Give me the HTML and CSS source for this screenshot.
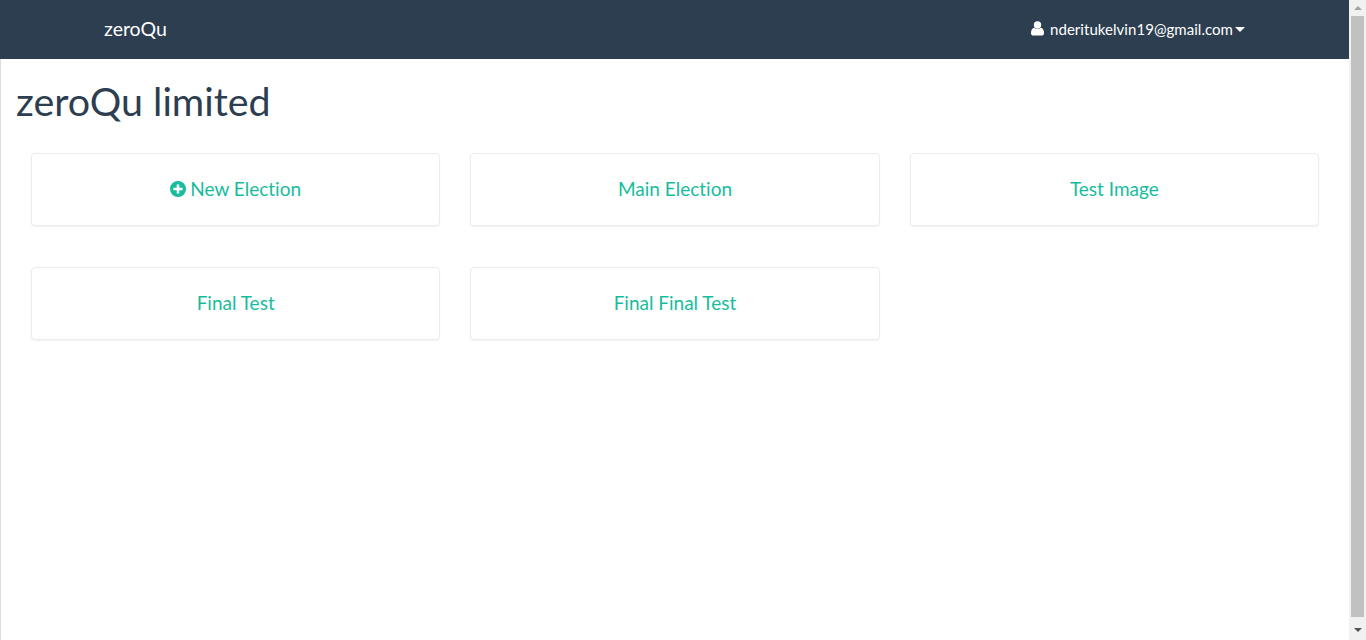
FILE: index.html
```html
<!DOCTYPE html>
<html lang="en">
<head>
<meta charset="utf-8">
<title>zeroQu limited</title>
<link rel="stylesheet" href="styles.css">
</head>
<body>
<div class="page">
  <header class="navbar">
    <a class="brand" href="#">zeroQu</a>
    <a class="user" href="#">
      <svg class="user-icon" viewBox="0 0 13 15" aria-hidden="true"><circle cx="6.5" cy="4" r="3.7" fill="#fff"/><path d="M0 12.2C0 9.2 1.2 7 3.2 6.8 4 7.6 5.1 8.1 6.5 8.1s2.5-.5 3.3-1.3c2 .2 3.2 2.4 3.2 5.4 0 1.5-1 2.4-2.4 2.4H2.4C1 14.6 0 13.7 0 12.2z" fill="#fff"/></svg>
      <span class="email">nderitukelvin19@gmail.com</span>
      <span class="caret"></span>
    </a>
  </header>
  <main class="content">
    <h1 class="title">zeroQu limited</h1>
    <div class="grid">
      <a class="card" href="#">
        <svg class="plus-icon" viewBox="0 0 16 16" aria-hidden="true"><path fill-rule="evenodd" d="M8 0a8 8 0 1 1 0 16A8 8 0 0 1 8 0zM6.7 3.4v3.3H3.4v2.6h3.3v3.3h2.6V9.3h3.3V6.7H9.3V3.4z" fill="#18bc9c"/></svg>
        <span>New Election</span>
      </a>
      <a class="card" href="#"><span>Main Election</span></a>
      <a class="card" href="#"><span>Test Image</span></a>
      <a class="card" href="#"><span>Final Test</span></a>
      <a class="card" href="#"><span>Final Final Test</span></a>
    </div>
  </main>
</div>
<div class="scrollbar" aria-hidden="true">
  <div class="arrow-up"></div>
  <div class="thumb"></div>
  <div class="arrow-down"></div>
</div>
</body>
</html>
```
FILE: styles.css
```css
* { box-sizing: border-box; }
html, body { margin: 0; height: 640px; overflow: hidden; }
body {
  display: flex;
  font-family: Lato, "Liberation Sans", sans-serif;
  font-variant-ligatures: none;
  background: #fff;
  color: #2c3e50;
}
a { text-decoration: none; }
.page { flex: 1; min-width: 0; display: flex; flex-direction: column; }
.navbar {
  height: 59px;
  flex: none;
  background: #2c3e50;
  display: flex;
  align-items: center;
  justify-content: space-between;
  padding: 0 104px 2px;
}
.brand { color: #fff; font-size: 19.5px; line-height: 57px; }
.user { color: #fff; font-size: 15px; display: flex; align-items: center; }
.user-icon { width: 13px; height: 15px; margin-right: 6px; }
.email { letter-spacing: 0.04px; }
.caret {
  width: 0; height: 0;
  margin-left: 2px;
  margin-top: 1px;
  border-left: 5px solid transparent;
  border-right: 5px solid transparent;
  border-top: 5px solid #fff;
}
.content {
  flex: 1;
  border-left: 1px solid #ddd;
  padding: 0 30px 0 30px;
}
.title {
  margin: 18px 0 0 -15px;
  font-size: 39.4px;
  font-weight: 400;
  line-height: 47px;
}
.grid {
  display: grid;
  grid-template-columns: repeat(3, 1fr);
  column-gap: 30px;
  row-gap: 41px;
  margin-top: 29px;
}
.card {
  height: 73px;
  display: flex;
  align-items: center;
  justify-content: center;
  gap: 4px;
  padding-bottom: 2px;
  border: 1px solid #ececec;
  border-radius: 4px;
  box-shadow: 0 1px 2px rgba(0,0,0,.06);
  color: #18bc9c;
  font-size: 19px;
  background: #fff;
}
.plus-icon { width: 16px; height: 16px; }
.scrollbar {
  width: 17px;
  flex: none;
  height: 640px;
  background: #f1f1f1;
  display: flex;
  flex-direction: column;
  align-items: center;
}
.arrow-up {
  margin-top: 6px;
  height: 0; width: 0;
  border-left: 4px solid transparent;
  border-right: 4px solid transparent;
  border-bottom: 4px solid #a3a3a3;
}
.thumb { width: 13px; margin-top: 6px; height: 601px; background: #c1c1c1; }
.arrow-down {
  margin-top: 11px;
  height: 0; width: 0;
  border-left: 4px solid transparent;
  border-right: 4px solid transparent;
  border-top: 4px solid #505050;
}
```
